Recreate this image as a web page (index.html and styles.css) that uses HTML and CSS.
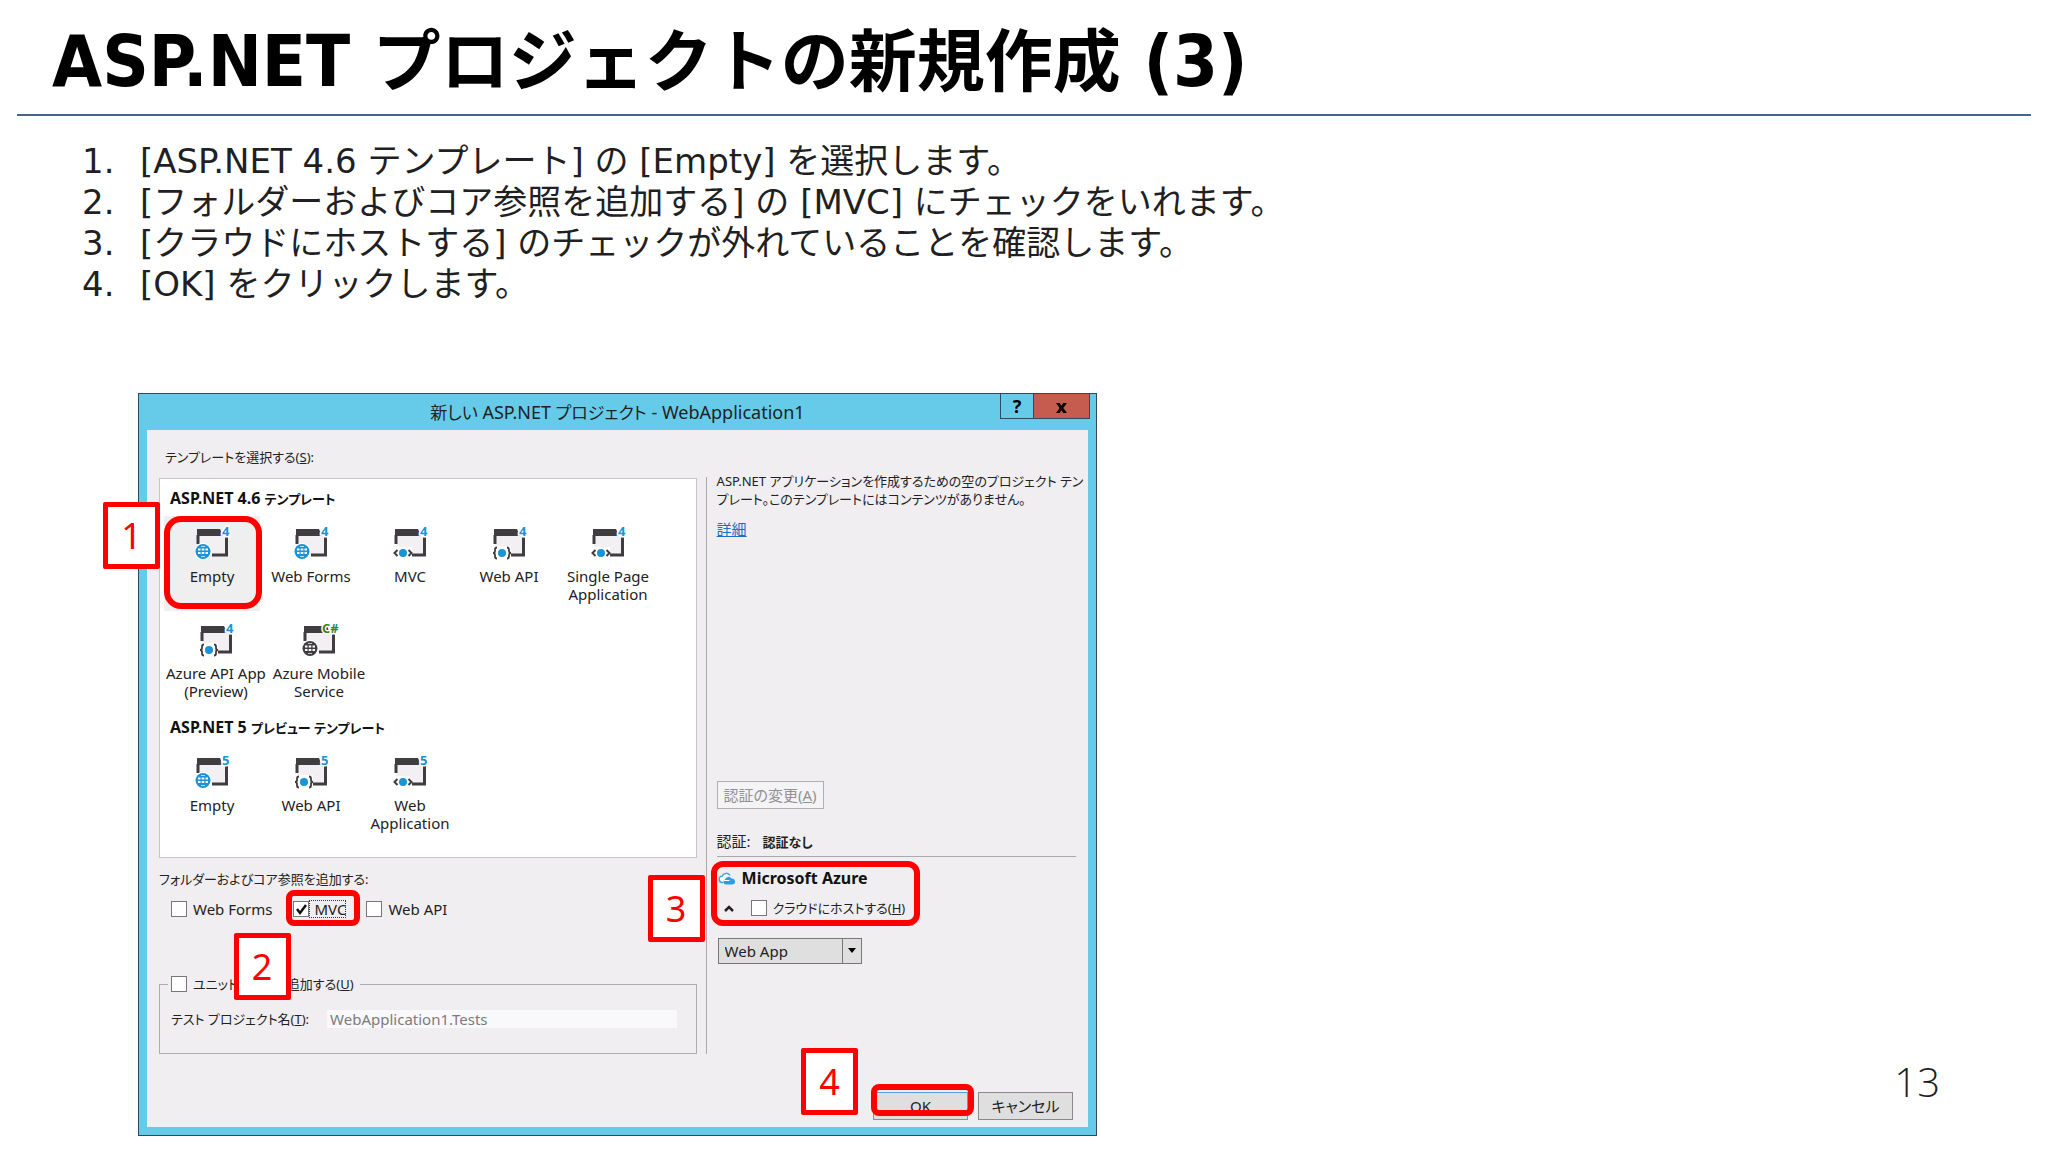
FILE: index.html
```html
<!DOCTYPE html>
<html lang="ja">
<head>
<meta charset="utf-8">
<meta name="viewport" content="width=device-width, initial-scale=1">
<title>ASP.NET プロジェクトの新規作成 (3)</title>
<link rel="stylesheet" href="styles.css">
</head>
<body>
<svg class="sprite" aria-hidden="true">
  <defs>
    <symbol id="window" viewBox="0 0 34 34">
      <path d="M3 9h28v20H3z" fill="#f2f0f3"/>
      <path d="M2 3h23l3 7H2z" fill="#3f3d40"/>
      <path d="M3 9v9M31.500 11v18H17" fill="none" stroke="#3f3d40" stroke-width="3"/>
    </symbol>
    <symbol id="globe" viewBox="0 0 34 34">
      <circle cx="8" cy="25.500" r="8.500" fill="#fff"/>
      <circle cx="8" cy="25.500" r="7.500" fill="currentColor"/>
      <path d="M3 23.500h2.500M6.700 23.500h2.600M10.500 23.500H13M3 27h2.500M6.700 27h2.600M10.500 27H13" fill="none" stroke="#fff" stroke-width="2"/>
      <path d="M6 20.500h4M6 30.500h4" fill="none" stroke="#fff" stroke-opacity=".7"/>
    </symbol>
    <symbol id="angles" viewBox="0 0 34 34">
      <path d="M0 21h19v12H0z" fill="#fff"/>
      <circle cx="10" cy="27" r="4" fill="#1a94d4"/>
      <path d="M4.500 24L1.500 27l3 3M15.500 24l3 3-3 3" fill="none" stroke="#3f3d40" stroke-width="2"/>
    </symbol>
    <symbol id="braces" viewBox="0 0 34 34">
      <path d="M0 20h19v14H0z" fill="#fff"/>
      <circle cx="10" cy="27" r="4" fill="#1a94d4"/>
      <path d="M5 21.500q-2 0-2 2v1.500q0 2-2 2 2 0 2 2v1.500q0 2 2 2M15 21.500q2 0 2 2v1.500q0 2 2 2-2 0-2 2v1.500q0 2-2 2" fill="none" stroke="#3f3d40" stroke-width="1.800"/>
    </symbol>
  </defs>
</svg>

<main class="slide">
  <h1 class="slide-title"><span class="latin">ASP.NET </span>プロジェクトの新規作成<span class="latin"> (3)</span></h1>

  <ol class="steps">
    <li>[ASP.NET 4.6 テンプレート] の [Empty] を選択します。</li>
    <li>[フォルダーおよびコア参照を追加する] の [MVC] にチェックをいれます。</li>
    <li>[クラウドにホストする] のチェックが外れていることを確認します。</li>
    <li>[OK] をクリックします。</li>
  </ol>

  <div class="stage">
    <section class="dialog" aria-label="新しい ASP.NET プロジェクト">
      <header class="titlebar">
        <h2><span>新しい</span> ASP.NET <span>プロジェクト</span> - WebApplication1</h2>
        <div class="window-buttons">
          <button type="button" class="help" aria-label="ヘルプ">?</button>
          <button type="button" class="close" aria-label="閉じる"><svg viewBox="0 0 12 11"><path d="M0 0h4l2 3 2-3h4L8 5.500l4 5.500H8L6 8l-2 3H0l4-5.500z"/></svg></button>
        </div>
      </header>

      <div class="client">
        <p class="list-label jp">テンプレートを選択する(<u>S</u>):</p>
        <div class="columns">
          <div class="left">
            <div class="templates">
              <h3>ASP.NET 4.6 <span class="jp">テンプレート</span></h3>
              <div class="tiles">
                <div class="tile selected">
                  <svg class="icon" viewBox="0 0 34 34"><use href="#window"/><use href="#globe"/><text x="27" y="10" class="ver">4</text></svg>
                  <span>Empty</span>
                  <i class="ring ring-tile"></i><b class="badge badge-tile">1</b>
                </div>
                <div class="tile">
                  <svg class="icon" viewBox="0 0 34 34"><use href="#window"/><use href="#globe"/><text x="27" y="10" class="ver">4</text></svg>
                  <span>Web Forms</span>
                </div>
                <div class="tile">
                  <svg class="icon" viewBox="0 0 34 34"><use href="#window"/><use href="#angles"/><text x="27" y="10" class="ver">4</text></svg>
                  <span>MVC</span>
                </div>
                <div class="tile">
                  <svg class="icon" viewBox="0 0 34 34"><use href="#window"/><use href="#braces"/><text x="27" y="10" class="ver">4</text></svg>
                  <span>Web API</span>
                </div>
                <div class="tile">
                  <svg class="icon" viewBox="0 0 34 34"><use href="#window"/><use href="#angles"/><text x="27" y="10" class="ver">4</text></svg>
                  <span>Single Page<br>Application</span>
                </div>
              </div>
              <div class="tiles">
                <div class="tile">
                  <svg class="icon" viewBox="0 0 34 34"><use href="#window"/><use href="#braces"/><text x="27" y="10" class="ver">4</text></svg>
                  <span>Azure API App<br>(Preview)</span>
                </div>
                <div class="tile">
                  <svg class="icon dark" viewBox="0 0 34 34"><use href="#window"/><use href="#globe"/><text x="20" y="10" class="ver lang">C#</text></svg>
                  <span>Azure Mobile<br>Service</span>
                </div>
              </div>
              <h3>ASP.NET 5 <span class="jp">プレビュー テンプレート</span></h3>
              <div class="tiles">
                <div class="tile">
                  <svg class="icon" viewBox="0 0 34 34"><use href="#window"/><use href="#globe"/><text x="27" y="10" class="ver">5</text></svg>
                  <span>Empty</span>
                </div>
                <div class="tile">
                  <svg class="icon" viewBox="0 0 34 34"><use href="#window"/><use href="#braces"/><text x="27" y="10" class="ver">5</text></svg>
                  <span>Web API</span>
                </div>
                <div class="tile">
                  <svg class="icon" viewBox="0 0 34 34"><use href="#window"/><use href="#angles"/><text x="27" y="10" class="ver">5</text></svg>
                  <span>Web<br>Application</span>
                </div>
              </div>
            </div>

            <p class="folders-label jp">フォルダーおよびコア参照を追加する:</p>
            <div class="checks">
              <label class="check"><input type="checkbox"><span>Web Forms</span></label>
              <label class="check focused"><input type="checkbox" checked><span>MVC</span><i class="ring ring-mvc"></i><b class="badge badge-mvc">2</b></label>
              <label class="check"><input type="checkbox"><span>Web API</span></label>
            </div>

            <fieldset class="tests">
              <legend><label class="check"><input type="checkbox"><span class="jp">ユニット テストを追加する(<u>U</u>)</span></label></legend>
              <div class="test-row">
                <label class="jp" for="test-name">テスト プロジェクト名(<u>T</u>):</label>
                <input type="text" id="test-name" value="WebApplication1.Tests" disabled>
              </div>
            </fieldset>
          </div>

          <div class="right">
            <p class="description jp">ASP.NET アプリケーションを作成するための空のプロジェクト テン<br>プレート。このテンプレートにはコンテンツがありません。</p>
            <a class="details" href="#">詳細</a>
            <button type="button" class="auth" disabled>認証の変更(<u>A</u>)</button>
            <p class="auth-state">認証: <b class="jp">認証なし</b></p>
            <div class="azure">
              <h3><svg class="cloud" viewBox="0 0 17 13"><path d="M4.500 10.500H4A3.200 3.200 0 0 1 3.700 4 4.400 4.400 0 0 1 11.500 3.500" fill="#fff" stroke="#3fa9e0" stroke-width="1.500"/><path d="M7 12.500a2.600 2.600 0 0 1-.5-5A3.600 3.600 0 0 1 13 6.500a3 3 0 0 1 1 6z" fill="#2b9fe0"/><path d="M5 8.500h6" stroke="#fff"/></svg>Microsoft Azure</h3>
              <div class="host">
                <svg class="caret" viewBox="0 0 10 7"><path d="M1 6l4-4 4 4" fill="none" stroke="#222" stroke-width="2.500"/></svg>
                <label class="check"><input type="checkbox"><span class="jp">クラウドにホストする(<u>H</u>)</span></label>
              </div>
              <i class="ring ring-azure"></i><b class="badge badge-azure">3</b>
            </div>
            <div class="select">
              <select aria-label="ホストの種類"><option>Web App</option></select>
              <svg viewBox="0 0 8 5"><path d="M0 0h8L4 5z"/></svg>
            </div>
          </div>
        </div>

        <footer class="actions">
          <div class="ok-wrap"><button type="button" class="ok">OK</button><i class="ring ring-ok"></i><b class="badge badge-ok">4</b></div>
          <button type="button">キャンセル</button>
        </footer>
      </div>
    </section>
    <p class="page-number">13</p>
  </div>
</main>
</body>
</html>
```

FILE: styles.css
```css
* { box-sizing: border-box; }

body {
  margin: 0;
  background: #fff;
  color: #1f1f24;
  font-family: "DejaVu Sans", "Noto Sans CJK JP", sans-serif;
}

h1, h2, h3, p, ol { margin: 0; }
.sprite { position: absolute; width: 0; height: 0; }

.slide {
  min-height: 100vh;
  padding: 0 17px 16px;
}

.slide-title {
  height: 116px;
  padding: 11px 35px 0;
  border-bottom: 2px solid #46658a;
  color: #000;
  font-family: "DejaVu Sans Condensed", "Noto Sans CJK JP", sans-serif;
  font-size: 68px;
  line-height: 100px;
  white-space: nowrap;
}
.slide-title .latin { font-size: 72px; white-space: pre; }

/* Steps */
.steps {
  padding: 25px 0 0 65px;
  list-style: none;
  counter-reset: step;
  font-size: 34px;
  line-height: 41px;
}
.steps li { display: flex; counter-increment: step; }
.steps li::before {
  content: counter(step) ".";
  flex: 0 0 58px;
}

.stage {
  display: flex;
  justify-content: space-between;
  align-items: flex-end;
  padding: 88px 91px 0 121px;
}
.page-number {
  padding-bottom: 26px;
  font-family: "Open Sans", "Noto Sans", sans-serif;
  font-size: 40px;
  font-weight: 300;
  line-height: 56px;
}

/* Dialog window */
.dialog {
  flex: 0 1 959px;
  border: 1px solid #2d4a5e;
  background: #66cbe9;
  color: #222;
  font-family: "Noto Sans", "Noto Sans CJK JP", sans-serif;
  font-feature-settings: "palt";
  font-size: 15px;
  line-height: 18px;
  padding: 0 8px 8px;
}
.dialog button, .dialog input, .dialog select { font: inherit; color: inherit; }
.jp { font-size: 13px; }

.titlebar { position: relative; height: 36px; }
.titlebar h2 {
  font-size: 18px;
  font-weight: 400;
  line-height: 37px;
  text-align: center;
}
.titlebar h2 span { font-size: 17px; }
.window-buttons {
  position: absolute;
  top: 0;
  right: -2px;
  display: flex;
}
.window-buttons button {
  height: 25px;
  padding: 0;
  border: 1px solid #2d4a5e;
  border-top: 0;
  background: none;
}
.window-buttons .help { width: 34px; font-size: 18px; font-weight: 700; color: #000; }
.window-buttons .close { width: 56px; border-left: 0; background: #c65b50; }
.close svg { width: 11px; height: 10px; vertical-align: middle; }

.client {
  padding: 18px 12px 7px;
  background: #f0eef1;
}
.list-label { padding-left: 6px; }

.columns {
  display: flex;
  gap: 9px;
  padding-top: 11px;
}
.left { flex: 3 1 537px; padding-top: 1px; }
.right {
  flex: 2 1 370px;
  min-width: 0;
  display: flex;
  flex-direction: column;
  align-items: flex-start;
  padding-left: 10px;
  border-left: 1px solid #aaa;
}

/* Template list */
.templates {
  padding: 0 4px 17px;
  border: 1px solid #c6c6c8;
  background: #fff;
}
.templates h3 {
  padding: 10px 6px 8px;
  font-size: 16px;
  line-height: 18px;
  color: #111;
}
.tiles { display: flex; gap: 3px; }
.tiles + .tiles { margin-top: 2px; }
.tile {
  position: relative;
  display: flex;
  flex-direction: column;
  align-items: center;
  min-width: 96px;
  min-height: 95px;
  padding: 10px 2px 0;
  text-align: center;
}
.selected { background: #efeff0; }
.icon {
  width: 34px;
  height: 34px;
  margin-bottom: 7px;
  overflow: visible;
  color: #1a94d4;
}
.icon.dark { color: #3f3d40; }
.ver {
  font: 700 13px "Noto Sans", sans-serif;
  fill: #1a94d4;
  stroke: #fff;
  stroke-width: 3px;
  paint-order: stroke;
}
.ver.lang { fill: #2f8a2f; }

/* Tick boxes */
.check { position: relative; display: flex; align-items: center; }
.check input {
  appearance: none;
  flex: none;
  width: 16px;
  height: 16px;
  margin: 0;
  border: 1px solid #777;
  background: #fff;
}
.check input:checked {
  background: #fff url("data:image/svg+xml,%3Csvg xmlns='http://www.w3.org/2000/svg' viewBox='0 0 14 14'%3E%3Cpath d='M3 7l3 4 6-8' fill='none' stroke='%23111' stroke-width='2.500'/%3E%3C/svg%3E");
}
.check span { padding-left: 6px; }
.focused span { outline: 1px dotted #333; outline-offset: -1px; }

.folders-label { margin-top: 12px; }
.checks {
  display: flex;
  gap: 20px;
  padding: 12px 12px 0;
}

.tests {
  min-width: 0;
  height: 79px;
  margin: 57px 0 0;
  padding: 17px 11px 0;
  border: 1px solid #adaeb2;
}
.tests legend { padding: 0 6px 0 3px; margin-left: -3px; }
.test-row { display: flex; align-items: center; gap: 18px; margin-right: 8px; }
.test-row input {
  flex: 1;
  min-width: 0;
  height: 18px;
  padding: 0 3px;
  border: 0;
  background: #f9f8fa;
}
.dialog .test-row input { color: #7c7c7c; }

/* Right column */
.description { margin-top: -5px; white-space: nowrap; }
.details { margin-top: 12px; color: #1b6ec8; }
.auth {
  width: 107px;
  height: 28px;
  margin-top: 243px;
  padding: 0;
  border: 1px solid #b0b0b2;
  background: #f4f3f5;
}
.dialog .auth { color: #929292; }
.auth-state {
  align-self: stretch;
  margin-top: 23px;
  padding-bottom: 5px;
  border-bottom: 1px solid #aaa;
}
.auth-state b { margin-left: 8px; }
.azure { position: relative; padding-top: 12px; }
.azure h3 { display: flex; align-items: center; gap: 6px; font-size: 16px; color: #111; padding-left: 1px; }
.cloud { width: 18px; height: 13px; }
.host { display: flex; align-items: center; gap: 17px; padding: 12px 0 0 7px; }
.caret { width: 10px; height: 7px; }
.select { position: relative; margin: 21px 0 0 1px; }
.select select {
  appearance: none;
  width: 144px;
  height: 26px;
  padding: 0 6px;
  border: 1px solid #777;
  border-radius: 0;
  background: linear-gradient(#777, #777) 123px 0 / 1px 100% no-repeat #dfdfdf;
}
.select svg { position: absolute; right: 6px; top: 10px; width: 8px; height: 5px; }

.actions {
  display: flex;
  justify-content: flex-end;
  gap: 10px;
  padding: 38px 3px 0;
}
.actions button {
  width: 95px;
  height: 28px;
  padding: 0;
  border: 1px solid #8a8a8a;
  background: #dfdfdf;
}
.actions .ok { border-color: #5a9be0; }
.ok-wrap { position: relative; }

/* Red annotations lying over the dialog */
.ring, .badge { position: absolute; border-color: #f00; border-style: solid; pointer-events: none; z-index: 1; }
.ring { border-width: 6px; border-radius: 8px; }
.badge {
  width: 57px;
  height: 67px;
  border-width: 5px;
  border-radius: 2px;
  background: #fff;
  color: #f00;
  font: 400 36px/57px "Noto Sans", sans-serif;
  text-align: center;
}
.ring-tile { inset: 0 -2px 2px 0; border-radius: 17px; }
.badge-tile { left: -61px; top: -14px; }
.ring-mvc { inset: -10px -14px -8px -7px; }
.badge-mvc { left: -59px; top: 33px; }
.ring-azure { inset: 4px -15px -9px -6px; border-radius: 12px; }
.badge-azure { left: -69px; top: 18px; }
.ring-ok { inset: -8px -6px 4px -2px; }
.badge-ok { left: -72px; top: -44px; }
```
